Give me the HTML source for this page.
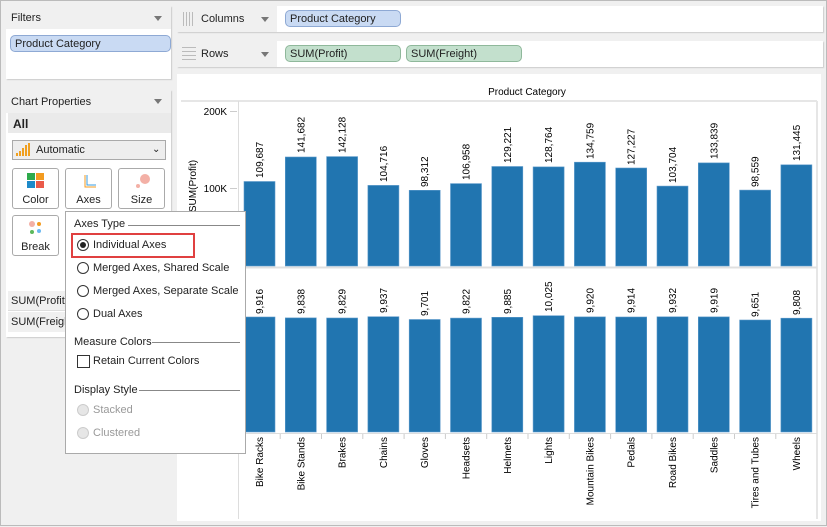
<!DOCTYPE html>
<html><head><meta charset="utf-8"><style>
*{margin:0;padding:0;box-sizing:border-box}
body{width:827px;height:526px;background:#f0f0f0;font-family:"Liberation Sans",Arial,sans-serif;font-size:11px;color:#222;position:relative;overflow:hidden;border:1px solid #bbb}
.abs{position:absolute}
.card{position:absolute;background:#fff;box-shadow:1px 1px 1px #ccc}
.hdr{position:absolute;left:0;right:0;top:0;height:23px;background:#f0f0f0;padding:6px 5px;}
.tri{position:absolute;width:0;height:0;border-left:4px solid transparent;border-right:4px solid transparent;border-top:5px solid #777}
.pill{position:absolute;height:17px;border-radius:5px;padding:2px 4px;font-size:11px;white-space:nowrap}
.blue{background:#c9daf3;border:1px solid #8ea9d4}
.green{background:#c3e0cd;border:1px solid #8fb89b}
.btn{position:absolute;width:47px;height:41px;border:1px solid #aaa;border-radius:3px;background:#fff;text-align:center;font-size:11px}
.radio{position:absolute;width:12px;height:12px;border:1px solid #333;border-radius:50%;background:#fff}
.opt{position:absolute;font-size:11px;white-space:nowrap}
</style></head><body>
<div class="card" style="left:5px;top:5px;width:165px;height:73px">
 <div class="hdr" style="background:#f0f0f0">Filters</div><div class="tri" style="left:148px;top:10px"></div>
 <div class="pill blue" style="left:4px;top:29px;width:161px">Product Category</div>
</div>
<div class="card" style="left:5px;top:89px;width:165px;height:247px">
 <div class="hdr">Chart Properties</div><div class="tri" style="left:148px;top:9px"></div>
 <div class="abs" style="left:2px;top:23px;width:163px;height:20px;background:#eaeaea;font-weight:bold;font-size:12px;padding:4px 5px">All</div>
 <div class="abs" style="left:6px;top:50px;width:154px;height:20px;border:1px solid #aaa;background:#eee;padding:3px 0 0 23px">Automatic</div>
 <svg class="abs" style="left:10px;top:53px" width="14" height="14"><g fill="#f0a020"><rect x="0" y="10" width="2" height="3"/><rect x="3" y="8" width="2" height="5"/><rect x="6" y="5" width="2" height="8"/><rect x="9" y="2" width="2" height="11"/><rect x="12" y="0" width="2" height="13"/></g></svg>
 <div class="abs" style="left:146px;top:54px;font-size:10px">&#8964;</div>
 <div class="btn" style="left:6px;top:78px"><svg width="20" height="18" style="margin-top:4px"><rect x="1" y="0" width="8" height="7" fill="#2eaa4c"/><rect x="10" y="0" width="8" height="7" fill="#f39b20"/><rect x="1" y="8" width="8" height="7" fill="#1e8ac9"/><rect x="10" y="8" width="8" height="7" fill="#ea5a4a"/></svg><div>Color</div></div>
 <div class="btn" style="left:59px;top:78px"><svg width="20" height="18" style="margin-top:4px"><path d="M6 2v12h11" stroke="#f39b20" fill="none"/><path d="M8 2v10h9" stroke="#3a9de0" fill="none"/></svg><div>Axes</div></div>
 <div class="btn" style="left:112px;top:78px"><svg width="20" height="18" style="margin-top:4px"><circle cx="13" cy="6" r="5" fill="#f3b0a6"/><circle cx="6" cy="13" r="2" fill="#f3b0a6"/></svg><div>Size</div></div>
 <div class="btn" style="left:6px;top:125px"><svg width="20" height="18" style="margin-top:4px"><circle cx="6" cy="4" r="3" fill="#f3b0a6"/><circle cx="13" cy="4" r="2" fill="#f39b20"/><circle cx="6" cy="12" r="2" fill="#5cb85c"/><circle cx="13" cy="11" r="2" fill="#6bb8f0"/></svg><div>Break</div></div>
 <div class="abs" style="left:2px;top:201px;width:163px;height:20px;background:#f0f0f0;padding:4px 3px;border-bottom:1px solid #ddd">SUM(Profit)</div>
 <div class="abs" style="left:2px;top:222px;width:163px;height:20px;background:#f0f0f0;padding:4px 3px">SUM(Freight)</div>
</div>
<div class="card" style="left:176px;top:5px;width:646px;height:26px">
 <div class="abs" style="left:0;top:0;width:100px;height:26px;background:#f0f0f0"></div>
 <svg class="abs" style="left:6px;top:6px" width="12" height="14"><g fill="#bbb"><rect x="0" width="1" height="14"/><rect x="3" width="1" height="14"/><rect x="6" width="1" height="14"/><rect x="9" width="1" height="14"/></g></svg>
 <div class="abs" style="left:24px;top:7px">Columns</div><div class="tri" style="left:84px;top:11px"></div>
 <div class="pill blue" style="left:108px;top:4px;width:116px">Product Category</div>
</div>
<div class="card" style="left:176px;top:40px;width:646px;height:26px">
 <div class="abs" style="left:0;top:0;width:100px;height:26px;background:#f0f0f0"></div>
 <svg class="abs" style="left:5px;top:6px" width="14" height="14"><g fill="#bbb"><rect y="0" width="14" height="1"/><rect y="4" width="14" height="1"/><rect y="8" width="14" height="1"/><rect y="12" width="14" height="1"/></g></svg>
 <div class="abs" style="left:24px;top:7px">Rows</div><div class="tri" style="left:84px;top:11px"></div>
 <div class="pill green" style="left:108px;top:4px;width:116px">SUM(Profit)</div>
 <div class="pill green" style="left:229px;top:4px;width:116px">SUM(Freight)</div>
</div>
<div class="abs" style="left:176px;top:73px;width:644px;height:447px;background:#fff"></div>
<svg class="abs" style="left:0;top:0" width="827" height="526" font-family="Liberation Sans, Arial, sans-serif" font-size="10">
 <text x="526" y="94" text-anchor="middle" font-size="10">Product Category</text>
 <line x1="180" y1="100" x2="816" y2="100" stroke="#e6e6e6" stroke-width="2"/>
 <line x1="816" y1="100" x2="816" y2="518" stroke="#e6e6e6" stroke-width="2"/>
 <line x1="237.5" y1="100" x2="237.5" y2="518" stroke="#ddd"/>
 <line x1="238" y1="266.5" x2="816" y2="266.5" stroke="#e0e0e0" stroke-width="2"/>
 <line x1="238" y1="432.5" x2="816" y2="432.5" stroke="#ddd"/>
 <text x="226" y="114" text-anchor="end">200K</text><line x1="229" y1="110.5" x2="236" y2="110.5" stroke="#ccc"/>
 <text x="226" y="191" text-anchor="end">100K</text><line x1="229" y1="187.5" x2="236" y2="187.5" stroke="#ccc"/>
 <text transform="translate(195,185) rotate(-90)" text-anchor="middle">SUM(Profit)</text>
 <g fill="#2175b0" stroke="#5d9acb" stroke-width="0.6">
 <rect x="243" y="180.5" width="31" height="84.5"/><rect x="284.3" y="156" width="31" height="109"/><rect x="325.6" y="155.6" width="31" height="109.4"/><rect x="366.9" y="184.4" width="31" height="80.6"/><rect x="408.2" y="189.3" width="31" height="75.7"/><rect x="449.5" y="182.6" width="31" height="82.4"/><rect x="490.8" y="165.5" width="31" height="99.5"/><rect x="532.1" y="165.9" width="31" height="99.1"/><rect x="573.4" y="161.2" width="31" height="103.8"/><rect x="614.7" y="167" width="31" height="98"/><rect x="656" y="185.1" width="31" height="79.9"/><rect x="697.3" y="161.9" width="31" height="103.1"/><rect x="738.6" y="189.1" width="31" height="75.9"/><rect x="779.9" y="163.8" width="31" height="101.2"/>
 <rect x="243" y="316" width="31" height="115"/><rect x="284.3" y="316.9" width="31" height="114.1"/><rect x="325.6" y="317" width="31" height="114"/><rect x="366.9" y="315.7" width="31" height="115.3"/><rect x="408.2" y="318.5" width="31" height="112.5"/><rect x="449.5" y="317.1" width="31" height="113.9"/><rect x="490.8" y="316.3" width="31" height="114.7"/><rect x="532.1" y="314.7" width="31" height="116.3"/><rect x="573.4" y="315.9" width="31" height="115.1"/><rect x="614.7" y="316" width="31" height="115"/><rect x="656" y="315.8" width="31" height="115.2"/><rect x="697.3" y="315.9" width="31" height="115.1"/><rect x="738.6" y="319" width="31" height="112"/><rect x="779.9" y="317.2" width="31" height="113.8"/>
 </g>
 <g text-anchor="start">
 <text transform="translate(262,177) rotate(-90)">109,687</text><text transform="translate(303.3,152) rotate(-90)">141,682</text><text transform="translate(344.6,152) rotate(-90)">142,128</text><text transform="translate(385.9,181) rotate(-90)">104,716</text><text transform="translate(427.2,186) rotate(-90)">98,312</text><text transform="translate(468.5,179) rotate(-90)">106,958</text><text transform="translate(509.8,162) rotate(-90)">129,221</text><text transform="translate(551.1,162) rotate(-90)">128,764</text><text transform="translate(592.4,158) rotate(-90)">134,759</text><text transform="translate(633.7,164) rotate(-90)">127,227</text><text transform="translate(675,182) rotate(-90)">103,704</text><text transform="translate(716.3,158) rotate(-90)">133,839</text><text transform="translate(757.6,186) rotate(-90)">98,559</text><text transform="translate(798.9,160) rotate(-90)">131,445</text>
 <text transform="translate(262,313) rotate(-90)">9,916</text><text transform="translate(303.3,313) rotate(-90)">9,838</text><text transform="translate(344.6,313) rotate(-90)">9,829</text><text transform="translate(385.9,312) rotate(-90)">9,937</text><text transform="translate(427.2,315) rotate(-90)">9,701</text><text transform="translate(468.5,313) rotate(-90)">9,822</text><text transform="translate(509.8,313) rotate(-90)">9,885</text><text transform="translate(551.1,311) rotate(-90)">10,025</text><text transform="translate(592.4,312) rotate(-90)">9,920</text><text transform="translate(633.7,312) rotate(-90)">9,914</text><text transform="translate(675,312) rotate(-90)">9,932</text><text transform="translate(716.3,312) rotate(-90)">9,919</text><text transform="translate(757.6,316) rotate(-90)">9,651</text><text transform="translate(798.9,314) rotate(-90)">9,808</text>
 </g>
 <g text-anchor="end">
 <text transform="translate(262,436) rotate(-90)">Bike Racks</text><text transform="translate(303.3,436) rotate(-90)">Bike Stands</text><text transform="translate(344.6,436) rotate(-90)">Brakes</text><text transform="translate(385.9,436) rotate(-90)">Chains</text><text transform="translate(427.2,436) rotate(-90)">Gloves</text><text transform="translate(468.5,436) rotate(-90)">Headsets</text><text transform="translate(509.8,436) rotate(-90)">Helmets</text><text transform="translate(551.1,436) rotate(-90)">Lights</text><text transform="translate(592.4,436) rotate(-90)">Mountain Bikes</text><text transform="translate(633.7,436) rotate(-90)">Pedals</text><text transform="translate(675,436) rotate(-90)">Road Bikes</text><text transform="translate(716.3,436) rotate(-90)">Saddles</text><text transform="translate(757.6,436) rotate(-90)">Tires and Tubes</text><text transform="translate(798.9,436) rotate(-90)">Wheels</text>
 </g>
 <g stroke="#ccc"><line x1="279.2" y1="433" x2="279.2" y2="438"/><line x1="320.5" y1="433" x2="320.5" y2="438"/><line x1="361.8" y1="433" x2="361.8" y2="438"/><line x1="403.1" y1="433" x2="403.1" y2="438"/><line x1="444.4" y1="433" x2="444.4" y2="438"/><line x1="485.7" y1="433" x2="485.7" y2="438"/><line x1="527" y1="433" x2="527" y2="438"/><line x1="568.3" y1="433" x2="568.3" y2="438"/><line x1="609.6" y1="433" x2="609.6" y2="438"/><line x1="650.9" y1="433" x2="650.9" y2="438"/><line x1="692.2" y1="433" x2="692.2" y2="438"/><line x1="733.5" y1="433" x2="733.5" y2="438"/><line x1="774.8" y1="433" x2="774.8" y2="438"/></g>
</svg>
<div class="abs" style="left:64px;top:210px;width:181px;height:243px;background:#fff;border:1px solid #aaa">
 <div class="opt" style="left:8px;top:6px">Axes Type</div><div class="abs" style="left:62px;top:13px;width:112px;height:1px;background:#888"></div>
 <div class="abs" style="left:5px;top:21px;width:124px;height:25px;border:2px solid #e04040"></div>
 <div class="radio" style="left:11px;top:27px"><div style="width:6px;height:6px;background:#222;border-radius:50%;margin:2px"></div></div><div class="opt" style="left:27px;top:27px">Individual Axes</div>
 <div class="radio" style="left:11px;top:50px"></div><div class="opt" style="left:27px;top:50px">Merged Axes, Shared Scale</div>
 <div class="radio" style="left:11px;top:73px"></div><div class="opt" style="left:27px;top:73px">Merged Axes, Separate Scale</div>
 <div class="radio" style="left:11px;top:96px"></div><div class="opt" style="left:27px;top:96px">Dual Axes</div>
 <div class="opt" style="left:8px;top:124px">Measure Colors</div><div class="abs" style="left:86px;top:130px;width:88px;height:1px;background:#888"></div>
 <div class="abs" style="left:11px;top:143px;width:13px;height:13px;border:1px solid #333"></div><div class="opt" style="left:27px;top:143px">Retain Current Colors</div>
 <div class="opt" style="left:8px;top:172px">Display Style</div><div class="abs" style="left:73px;top:178px;width:101px;height:1px;background:#888"></div>
 <div class="radio" style="left:11px;top:192px;background:#e6e6e6;border-color:#ccc"></div><div class="opt" style="left:27px;top:192px;color:#999">Stacked</div>
 <div class="radio" style="left:11px;top:215px;background:#e6e6e6;border-color:#ccc"></div><div class="opt" style="left:27px;top:215px;color:#999">Clustered</div>
</div>
</body></html>
